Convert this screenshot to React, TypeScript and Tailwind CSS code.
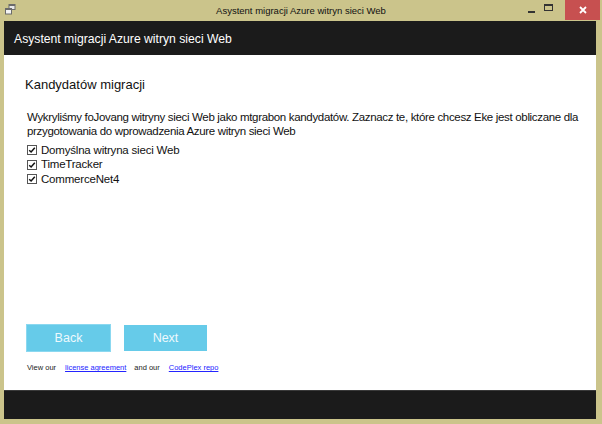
import React from "react";

const Check = () => (
  <span className="w-[10px] h-[10px] border border-[#555] bg-white flex items-center justify-center shrink-0">
    <svg width="8" height="8" viewBox="0 0 8 8">
      <path d="M1.2 4.2 L3.1 6 L6.8 1.8" fill="none" stroke="#111" strokeWidth="1.5" />
    </svg>
  </span>
);

export default function App() {
  const items = ["Domyślna witryna sieci Web", "TimeTracker", "CommerceNet4"];
  return (
    <div
      className="w-[602px] h-[424px] bg-[#cbc48b] flex flex-col overflow-hidden"
      style={{ fontFamily: '"Liberation Sans", Arial, sans-serif' }}
    >
      {/* title bar */}
      <div className="h-[21px] relative flex items-center justify-center shrink-0">
        <svg className="absolute left-[5px] top-[4px]" width="11" height="11" viewBox="0 0 11 11">
          <rect x="4" y="0.5" width="6" height="5" fill="#e8e8e8" stroke="#6b6b6b" />
          <rect x="4" y="0.5" width="6" height="1.5" fill="#6b6b6b" />
          <rect x="0.5" y="4.5" width="6" height="5.5" fill="#f4f4f4" stroke="#6b6b6b" />
          <rect x="0.5" y="4.5" width="6" height="1.5" fill="#6b6b6b" />
        </svg>
        <span className="text-[9.5px] text-[#111] leading-none mt-[1px]">Asystent migracji Azure witryn sieci Web</span>
        <div className="absolute right-[2px] top-0 flex items-start">
          <div className="w-[18px] h-[19px] flex items-center justify-center">
            <span className="w-[7px] h-[2px] bg-[#333] mt-[4px]" />
          </div>
          <div className="w-[16px] h-[19px] flex items-start justify-center pt-[4px]">
            <span className="w-[9px] h-[7px] border border-[#333] border-t-2" />
          </div>
          <div className="w-[35px] h-[20px] bg-[#c75050] ml-[9px] flex items-center justify-center">
            <svg width="8" height="8" viewBox="0 0 8 8">
              <path d="M1 1 L7 7 M7 1 L1 7" stroke="#fff" strokeWidth="1.8" />
            </svg>
          </div>
        </div>
      </div>

      {/* body */}
      <div className="flex-1 flex flex-col ml-[4px] mr-[6px] mb-[5px]">
        <div className="h-[34px] bg-[#1b1b1b] flex items-center pl-[10px] shrink-0">
          <span className="text-white text-[12.2px] leading-none mt-[2px]">Asystent migracji Azure witryn sieci Web</span>
        </div>
        <div className="flex-1 bg-white flex flex-col pl-[21px] pr-[10px]">
          <div className="pt-[22px] text-[13px] leading-[16px] text-[#111]">Kandydatów migracji</div>
          <div className="mt-[17px] pl-[2px] text-[11.5px] leading-[14px] tracking-[-0.33px] text-[#111]">
            Wykryliśmy foJovang witryny sieci Web jako mtgrabon kandydatów. Zaznacz te, które chcesz Eke jest obliczane dla
            przygotowania do wprowadzenia Azure witryn sieci Web
          </div>
          <div className="mt-[5px] pl-[2px] flex flex-col">
            {items.map((t) => (
              <div key={t} className="h-[14.5px] flex items-center gap-[4px]">
                <Check />
                <span className="text-[11.5px] tracking-[-0.2px] leading-none text-[#111]">{t}</span>
              </div>
            ))}
          </div>
          <div className="mt-auto flex items-start gap-[13px] pl-[1px]">
            <div className="w-[85px] h-[28px] bg-[#66cbe9] border border-[#8bd8f0] flex items-center justify-center text-[12.5px] text-[#eef9fd]">
              Back
            </div>
            <div className="w-[83px] h-[26px] mt-[1px] bg-[#66cbe9] flex items-center justify-center text-[12.5px] text-[#eef9fd]">
              Next
            </div>
          </div>
          <div className="mt-[11px] mb-[17px] h-[10px] flex items-center text-[7.5px] leading-none pl-[2px]">
            <span className="text-[#222]">View our</span>
            <span className="ml-[9px] text-[#2424ff] underline">license agreement</span>
            <span className="ml-[8px] text-[#222]">and our</span>
            <span className="ml-[9px] text-[#2424ff] underline">CodePlex repo</span>
          </div>
        </div>
        <div className="h-[29px] bg-[#1b1b1b] border-t border-[#3a3a3a] shrink-0" />
      </div>
    </div>
  );
}
